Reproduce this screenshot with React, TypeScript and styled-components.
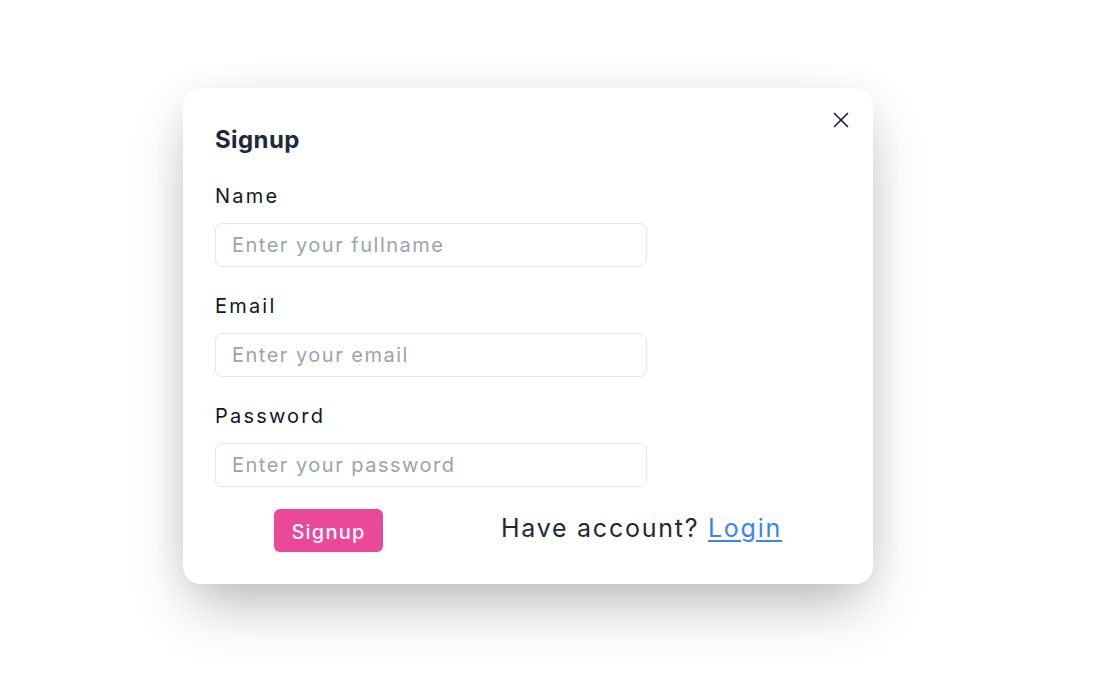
import React from "react";
import styled, { createGlobalStyle } from "styled-components";

const GlobalStyle = createGlobalStyle`
  html, body { margin: 0; padding: 0; background: #ffffff; }
  body { font-family: "Inter", "Noto Sans", sans-serif; color: #1f2937; }
  * { box-sizing: border-box; }
`;

const Page = styled.div`
  width: 1117px;
  height: 681px;
  padding: 88px 0 0 183px;
  overflow: hidden;
`;

const Card = styled.form`
  position: relative;
  width: 690px;
  height: 496px;
  padding: 33px 32px 32px;
  background: #ffffff;
  border-radius: 18px;
  box-shadow: 0 28px 60px -10px rgba(0, 0, 0, 0.28), 0 0 36px rgba(0, 0, 0, 0.05);
  display: flex;
  flex-direction: column;
`;

const CloseButton = styled.button`
  position: absolute;
  top: 20px;
  right: 20px;
  width: 24px;
  height: 24px;
  padding: 0;
  border: none;
  background: transparent;
  display: flex;
  align-items: center;
  justify-content: center;
  cursor: pointer;
  color: #1e293b;
`;

const Title = styled.h3`
  margin: 3px 0 25px;
  font-size: 24px;
  line-height: 32px;
  font-weight: 700;
  letter-spacing: 0.4px;
  color: #1e293b;
`;

const Field = styled.div`
  display: flex;
  flex-direction: column;
  & + & {
    margin-top: 24px;
  }
`;

const Label = styled.label`
  padding-top: 2px;
  font-size: 20px;
  line-height: 26px;
  letter-spacing: 2.2px;
  color: #111827;
  margin-bottom: 14px;
`;

const Input = styled.input`
  width: 432px;
  height: 44px;
  padding: 0 16px;
  border: 1px solid #e5e7eb;
  border-radius: 7px;
  font-family: inherit;
  font-size: 20px;
  letter-spacing: 1.5px;
  color: #1f2937;
  background: #ffffff;
  outline: none;
  &::placeholder {
    color: #9ca3af;
  }
`;

const Actions = styled.div`
  margin-top: 22px;
  display: flex;
  align-items: center;
  justify-content: space-around;
`;

const SubmitButton = styled.button`
  width: 109px;
  height: 43px;
  padding: 3px 0 0;
  border: none;
  border-radius: 6px;
  background: #ec4899;
  color: #ffffff;
  font-family: inherit;
  font-size: 20px;
  font-weight: 500;
  letter-spacing: 1.2px;
  cursor: pointer;
`;

const Prompt = styled.p`
  margin: 0 0 6px;
  font-size: 25px;
  line-height: 36px;
  letter-spacing: 1.75px;
  color: #1f2937;
  white-space: nowrap;
`;

const LoginLink = styled.a`
  color: #3b82f6;
  text-decoration: underline;
  text-underline-offset: 3px;
  text-decoration-thickness: 1.5px;
  cursor: pointer;
`;

function CloseIcon() {
  return (
    <svg width="16" height="16" viewBox="0 0 16 16" fill="none" stroke="currentColor" strokeWidth="1.7" strokeLinecap="round">
      <path d="M1.5 1.5 L14.5 14.5" />
      <path d="M14.5 1.5 L1.5 14.5" />
    </svg>
  );
}

export default function App() {
  return (
    <>
      <GlobalStyle />
      <Page>
        <Card onSubmit={(e) => e.preventDefault()}>
          <CloseButton type="button" aria-label="Close">
            <CloseIcon />
          </CloseButton>
          <Title>Signup</Title>
          <Field>
            <Label htmlFor="name">Name</Label>
            <Input id="name" type="text" placeholder="Enter your fullname" />
          </Field>
          <Field>
            <Label htmlFor="email">Email</Label>
            <Input id="email" type="email" placeholder="Enter your email" />
          </Field>
          <Field>
            <Label htmlFor="password">Password</Label>
            <Input id="password" type="password" placeholder="Enter your password" />
          </Field>
          <Actions>
            <SubmitButton type="submit">Signup</SubmitButton>
            <Prompt>
              Have account? <LoginLink>Login</LoginLink>
            </Prompt>
          </Actions>
        </Card>
      </Page>
    </>
  );
}
